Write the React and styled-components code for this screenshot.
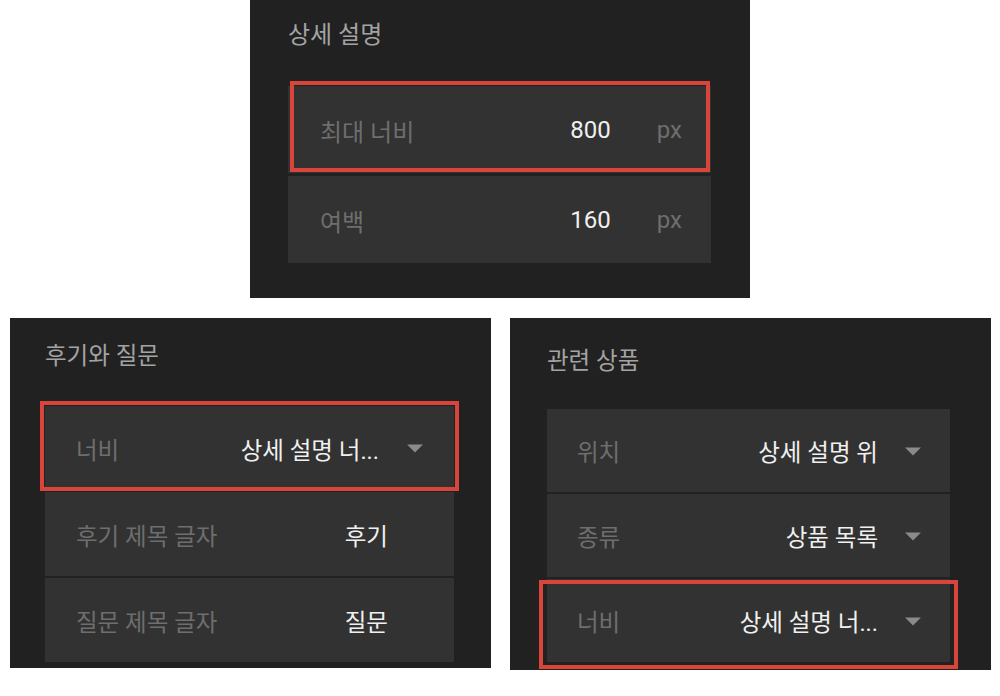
import styled, { createGlobalStyle } from "styled-components";

const GlobalStyle = createGlobalStyle`
    html, body {
        margin: 0;
        padding: 0;
        background: #ffffff;
    }
    body {
        font-family: Roboto, "Noto Sans CJK KR", "Noto Sans", sans-serif;
    }
`

const Page = styled.div`
    width: 1000px;
    height: 696px;
    overflow: hidden;
    background: #ffffff;
`
const TopRow = styled.div`
    display: flex;
    justify-content: center;
`
const BottomRow = styled.div`
    display: flex;
    align-items: flex-start;
    gap: 19px;
    padding-left: 10px;
    margin-top: 20px;
`
const Panel = styled.section`
    box-sizing: border-box;
    width: ${props => props.$width}px;
    height: ${props => props.$height}px;
    padding: 0 ${props => props.$padRight}px 0 ${props => props.$padLeft}px;
    background: #212121;
    font-size: ${props => props.$fontSize}px;
`
const PanelTitle = styled.h2`
    margin: 0;
    height: ${props => props.$height}px;
    display: flex;
    align-items: center;
    font-size: inherit;
    font-weight: 400;
    color: #a3a3a3;
`
const RowList = styled.div`
    display: flex;
    flex-direction: column;
    gap: ${props => props.$gap}px;
    margin-top: ${props => props.$offset}px;
`
const Row = styled.div`
    position: relative;
    box-sizing: border-box;
    height: ${props => props.$height}px;
    display: flex;
    align-items: center;
    padding: 1px ${props => props.$padRight || 30}px 0 ${props => props.$padLeft || 31}px;
    background: #323232;
`
const Label = styled.span`
    flex: 1;
    color: #6e6e6e;
    white-space: nowrap;
`
const Value = styled.span`
    color: #f0f0f0;
    white-space: nowrap;
`
const Unit = styled.span`
    margin-left: 46px;
    color: #6e6e6e;
`
const CaretIcon = styled.svg`
    display: block;
    flex: none;
    margin-left: ${props => props.$gap || 28}px;
`
const Highlight = styled.div`
    position: absolute;
    top: ${props => props.$top}px;
    right: ${props => props.$right}px;
    bottom: ${props => props.$bottom}px;
    left: ${props => props.$left}px;
    border: 4px solid #d9443b;
    pointer-events: none;
`

function Caret({ gap }) {
    return (
        <CaretIcon $gap={gap} width="16" height="9" viewBox="0 0 16 9">
            <polygon points="0,0.5 16,0.5 8,8.5" fill="#8a8a8a" />
        </CaretIcon>
    )
}

function App() {
    return (
        <Page>
            <GlobalStyle />
            <TopRow>
                <Panel $width={500} $height={298} $padLeft={38} $padRight={39} $fontSize={24}>
                    <PanelTitle $height={64}>상세 설명</PanelTitle>
                    <RowList $gap={3} $offset={22}>
                        <Row $height={87} $padLeft={32} $padRight={29}>
                            <Label>최대 너비</Label>
                            <Value>800</Value>
                            <Unit>px</Unit>
                            <Highlight $top={-5} $right={1} $bottom={1} $left={2} />
                        </Row>
                        <Row $height={87} $padLeft={32} $padRight={29}>
                            <Label>여백</Label>
                            <Value>160</Value>
                            <Unit>px</Unit>
                        </Row>
                    </RowList>
                </Panel>
            </TopRow>
            <BottomRow>
                <Panel $width={481} $height={350} $padLeft={35} $padRight={37} $fontSize={23.5}>
                    <PanelTitle $height={72}>후기와 질문</PanelTitle>
                    <RowList $gap={2} $offset={16}>
                        <Row $height={84} $padRight={31}>
                            <Label>너비</Label>
                            <Value>상세 설명 너...</Value>
                            <Caret />
                            <Highlight $top={-5} $right={-5} $bottom={-1} $left={-5} />
                        </Row>
                        <Row $height={84} $padRight={66}>
                            <Label>후기 제목 글자</Label>
                            <Value>후기</Value>
                        </Row>
                        <Row $height={84} $padRight={66}>
                            <Label>질문 제목 글자</Label>
                            <Value>질문</Value>
                        </Row>
                    </RowList>
                </Panel>
                <Panel $width={481} $height={352} $padLeft={37} $padRight={41} $fontSize={23.5}>
                    <PanelTitle $height={82}>관련 상품</PanelTitle>
                    <RowList $gap={2} $offset={9}>
                        <Row $height={83} $padLeft={30} $padRight={29}>
                            <Label>위치</Label>
                            <Value>상세 설명 위</Value>
                            <Caret gap={27} />
                        </Row>
                        <Row $height={83} $padLeft={30} $padRight={29}>
                            <Label>종류</Label>
                            <Value>상품 목록</Value>
                            <Caret gap={27} />
                        </Row>
                        <Row $height={83} $padLeft={30} $padRight={29}>
                            <Label>너비</Label>
                            <Value>상세 설명 너...</Value>
                            <Caret gap={27} />
                            <Highlight $top={1} $right={-8} $bottom={-7} $left={-8} />
                        </Row>
                    </RowList>
                </Panel>
            </BottomRow>
        </Page>
    )
}

export default App;
